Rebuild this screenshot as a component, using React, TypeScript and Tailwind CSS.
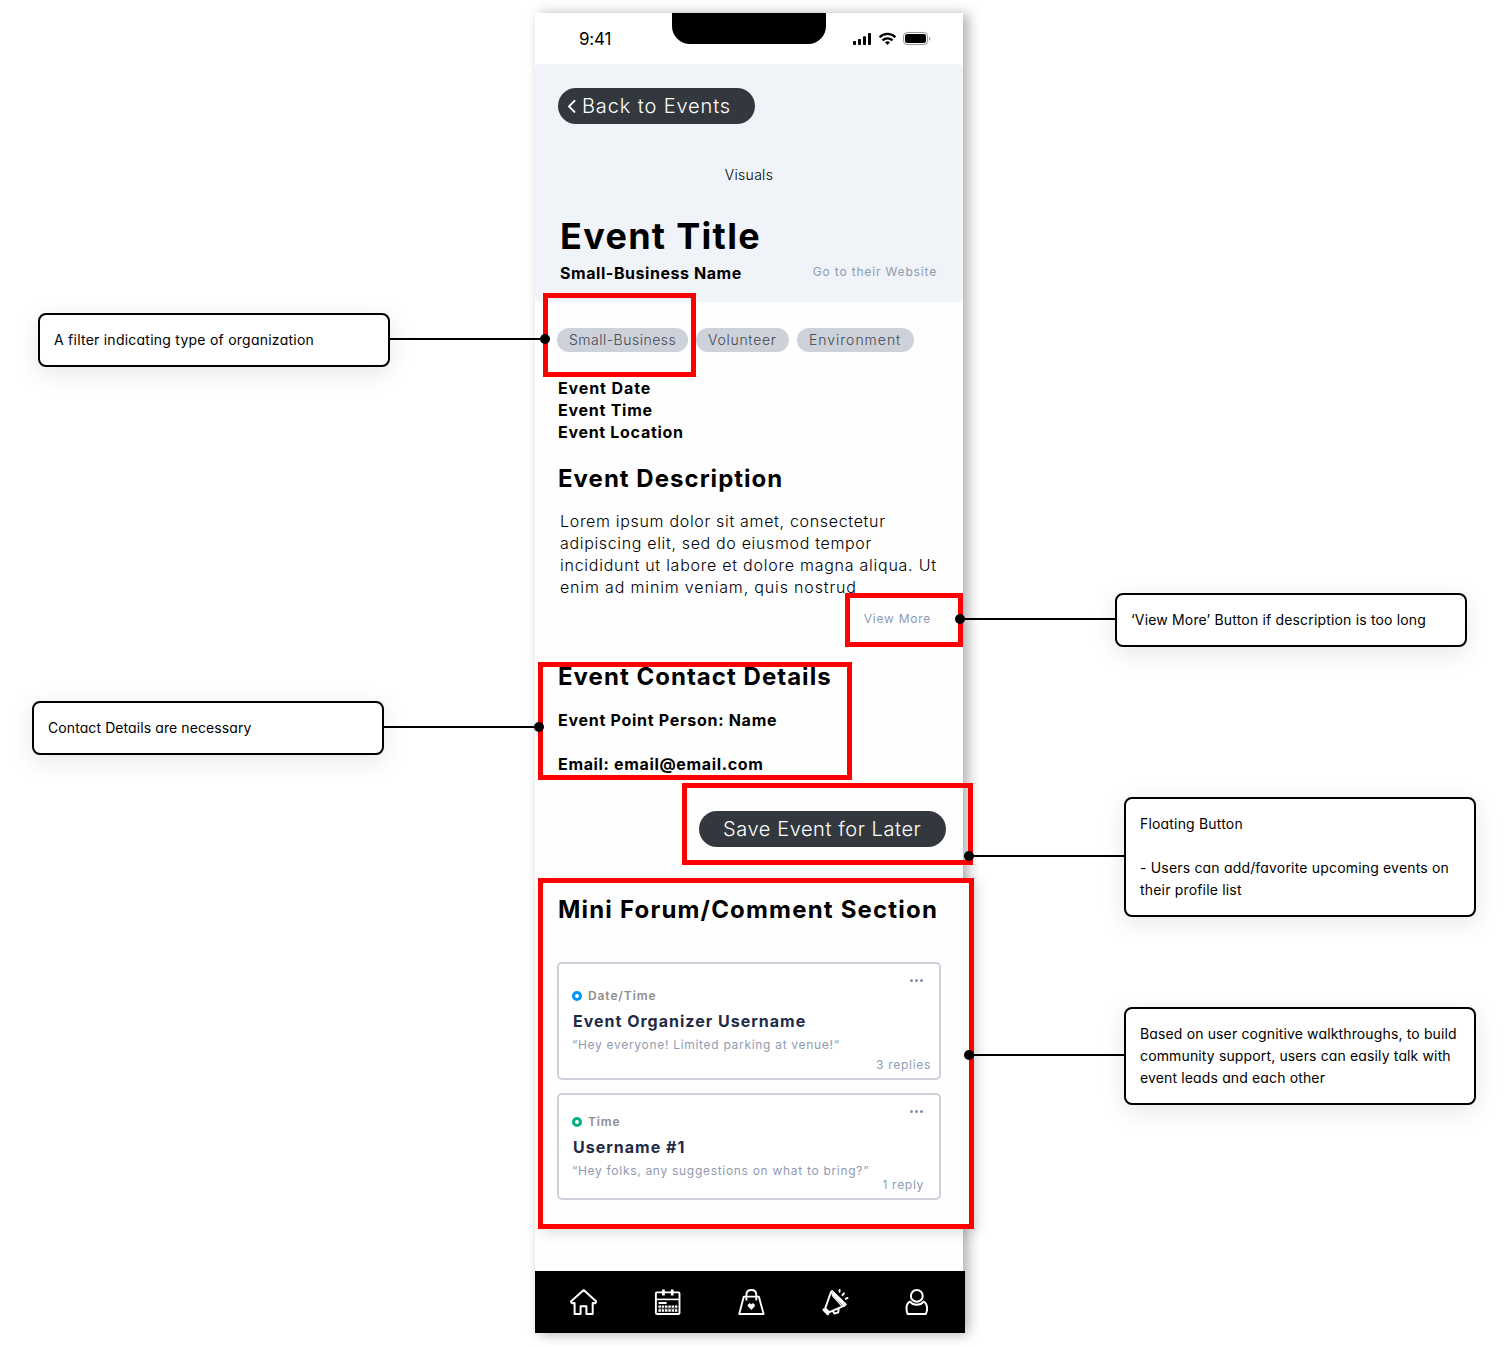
import React from "react";

function StatusIcons() {
  return (
    <svg width="80" height="16" viewBox="0 0 80 16" fill="none">
      <g fill="#000">
        <rect x="1" y="10" width="3" height="4" rx="0.8" />
        <rect x="6" y="8" width="3" height="6" rx="0.8" />
        <rect x="11" y="5.3" width="3" height="8.7" rx="0.8" />
        <rect x="16" y="2" width="3" height="12" rx="0.8" />
      </g>
      <g stroke="#000" strokeWidth="2.3">
        <path d="M27.6 6.2C32 1.7 39 1.7 43.4 6.2" />
        <path d="M30.5 9.4C33.3 6.6 37.7 6.6 40.5 9.4" />
      </g>
      <path d="M32.9 11.2C34.4 9.9 36.6 9.9 38.1 11.2L35.5 13.9Z" fill="#000" />
      <rect x="51.5" y="1.5" width="24" height="12" rx="3.6" stroke="#000" strokeOpacity="0.4" />
      <rect x="53" y="3" width="21" height="9" rx="2.2" fill="#000" />
      <path d="M77 5.8V9.8C77.8 9.4 78.3 8.7 78.3 7.8S77.8 6.2 77 5.8Z" fill="#000" fillOpacity="0.4" />
    </svg>
  );
}

function HomeIcon() {
  return (
    <svg className="size-7" viewBox="0 0 28 28" fill="none" stroke="#fff" strokeWidth="2" strokeLinejoin="round" strokeLinecap="round">
      <path d="M14.7 2 1.9 13.6 3 15.2 5.6 15V25.9H11.6V18.2H17.4V25.9H23.7V15L26.3 15.2 27.3 13.6Z" />
    </svg>
  );
}

function CalendarIcon() {
  return (
    <svg className="size-7" viewBox="0 0 28 28" fill="none" stroke="#fff">
      <rect x="2.9" y="4.4" width="23.6" height="21.6" rx="1" strokeWidth="1.9" />
      <path d="M3 11.4H26.4" strokeWidth="1.6" />
      <path d="M10.4 1.4V7.6M19.2 1.4V7.6" strokeWidth="2.8" />
      <path d="M5.6 15H13.6" strokeWidth="2" />
      <path d="M5.4 18.6H24.4M5.4 22.5H24.4" strokeWidth="2.3" strokeDasharray="2.5 0.8" />
      <path d="M5.6 20.6H24.2" strokeWidth="1" strokeOpacity="0.3" />
    </svg>
  );
}

function BagIcon() {
  return (
    <svg className="size-7" viewBox="0 0 28 28" fill="none" stroke="#fff" strokeWidth="1.9" strokeLinejoin="round">
      <path d="M6.8 8.6H21.8L26.6 26H2.2Z" />
      <path d="M9.4 12.4V6.9C9.4 3.8 11.6 2 14.4 2S19.3 3.8 19.3 6.9V12.4" />
      <path d="M14.3 21.6 11.3 18.3C10.1 16.7 12.6 14.5 14.3 16.6 16 14.5 18.5 16.7 17.3 18.3Z" fill="#fff" strokeWidth="0.8" />
    </svg>
  );
}

function MegaphoneIcon() {
  return (
    <svg className="size-7" viewBox="0 0 28 28" fill="none" stroke="#fff" strokeWidth="1.7" strokeLinejoin="round" strokeLinecap="round">
      <path d="M11 2.9 24.9 16.4 23.1 17.7 9.9 4.5Z" />
      <path d="M11.4 7.6 20.2 17.4" strokeWidth="1.3" />
      <path d="M12.6 5.6 21.9 15.2" strokeWidth="1.8" />
      <path d="M9.9 4.2 4.2 20.4 8.5 24.2 23.3 17.7" strokeWidth="1.9" />
      <path d="M2.9 21.8 6.8 25.6" strokeWidth="3" />
      <path d="M11.8 22.8 13.4 25.6 17.2 24.4 17.6 20.8" strokeWidth="2" />
      <path d="M18.6 2V3.8M22.9 5.3 21.4 7.1M26.6 9.9 24.8 10.9" strokeWidth="1.9" />
    </svg>
  );
}

function ProfileIcon() {
  return (
    <svg className="size-7" viewBox="0 0 28 28" fill="none" stroke="#fff" strokeWidth="2" strokeLinejoin="round">
      <circle cx="11.8" cy="7.9" r="5.9" />
      <path d="M5 13.6C2.7 14.4 1.6 17.6 1.5 20.4 1.4 22.6 2 24.6 2.6 26H20.8C21.5 24.6 22.2 22.6 22.1 20.4 21.9 17.6 20.9 14.4 18.6 13.6 17.2 15.4 14.8 16.8 11.8 16.8S6.4 15.4 5 13.6Z" />
    </svg>
  );
}

function Chip({ children, className }: { children: string; className: string }) {
  return (
    <span className={`flex h-6 items-center whitespace-nowrap rounded-full bg-[#cdd1d9] pl-3 text-sm font-[350] text-[#444952] ${className}`}>
      {children}
    </span>
  );
}

interface CommentProps {
  className: string;
  ring: string;
  when: string;
  whenClass: string;
  author: string;
  text: string;
  replies: string;
  repliesClass: string;
}

function Comment({ className, ring, when, whenClass, author, text, replies, repliesClass }: CommentProps) {
  return (
    <article className={`flex w-96 flex-col whitespace-nowrap rounded-[5px] border-2 border-[#cdd1d9] bg-white pt-3 pl-[13px] ${className}`}>
      <div className="flex h-2 shrink-0 items-center justify-end gap-[2px] pr-4">
        <i className="size-[3px] rounded-full bg-[#8190ad]" />
        <i className="size-[3px] rounded-full bg-[#8190ad]" />
        <i className="size-[3px] rounded-full bg-[#8190ad]" />
      </div>
      <div className={`flex h-4 shrink-0 items-center gap-1.5 text-[12px] font-semibold tracking-[0.9px] text-[#8d8d8d] ${whenClass}`}>
        <i className={`size-2.5 rounded-full border-3 ${ring}`} />
        {when}
      </div>
      <h3 className="mt-[7px] ml-px text-base leading-5 font-bold tracking-[1px] text-[#222b45]">{author}</h3>
      <p className="mt-1.5 text-[12px] leading-4 tracking-[0.7px] text-[#8f9bb3]">{text}</p>
      <span className={`self-end text-[12px] leading-4 tracking-[0.7px] text-[#8f9bb3] ${repliesClass}`}>{replies}</span>
    </article>
  );
}

function Note({ className, children }: { className: string; children: React.ReactNode }) {
  return (
    <div className={`absolute w-[352px] rounded-lg border-2 border-black bg-white p-3.5 text-sm leading-[22px] whitespace-nowrap text-black shadow-[0_6px_24px_rgba(0,0,0,0.1)] [font-feature-settings:'cv11'] ${className}`}>
      {children}
    </div>
  );
}

function Connector({ className, end }: { className: string; end: "left" | "right" }) {
  return (
    <div className={`absolute flex h-2.5 items-center ${end === "left" ? "flex-row" : "flex-row-reverse"} ${className}`}>
      <i className="size-2.5 shrink-0 rounded-full bg-black" />
      <i className="h-0.5 grow bg-black" />
    </div>
  );
}

export default function App() {
  return (
    <div className="relative h-[1346px] w-[1508px] overflow-hidden bg-white font-['Inter','Liberation_Sans',sans-serif] text-black">
      <main className="mt-[13px] ml-[535px] flex h-[1320px] w-[428px] flex-col bg-[#fefefe] shadow-[5px_1px_12px_rgba(0,0,0,0.32)]">
        <header className="flex h-[51px] shrink-0 bg-white pl-11">
          <time className="mt-3.5 w-[93px] text-[17px] leading-6 tracking-[-0.2px]">9:41</time>
          <div className="h-[31px] w-[154px] rounded-b-[18px] bg-black" />
          <div className="mt-[18px] ml-[26px]">
            <StatusIcons />
          </div>
        </header>

        <section className="flex h-[238px] shrink-0 flex-col whitespace-nowrap rounded-[5px] bg-[#f0f3f8] pt-6">
          <button className="ml-[23px] flex h-9 w-[197px] items-center rounded-full bg-[#33383f] pl-[9px] text-xl font-light tracking-[0.88px] text-white">
            <svg className="mr-[5px] h-4 w-2.5" viewBox="0 0 10 16" fill="none" stroke="#fff" strokeWidth="2" strokeLinecap="round" strokeLinejoin="round">
              <path d="M7.5 2.9 2 8.4 7.5 13.9" />
            </svg>
            Back to Events
          </button>
          <p className="mt-[41px] text-center text-sm leading-5 font-[350] tracking-[0.3px]">Visuals</p>
          <h1 className="mt-[29px] ml-[25px] text-[36px] leading-[44px] font-bold tracking-[1.3px]">Event Title</h1>
          <div className="mt-1 flex items-center justify-between pr-[26px] pl-[25px]">
            <h2 className="text-base leading-[22px] font-bold tracking-[0.56px]">Small-Business Name</h2>
            <a className="mb-0.5 text-[12px] leading-4 tracking-[0.84px] text-[#8f9bb3]">Go to their Website</a>
          </div>
        </section>

        <div className="mt-[26px] ml-[22px] flex gap-2">
          <Chip className="w-[131px] tracking-[0.5px]">Small-Business</Chip>
          <Chip className="w-[93px] tracking-[0.72px]">Volunteer</Chip>
          <Chip className="w-[117px] tracking-[0.98px]">Environment</Chip>
        </div>

        <ul className="mt-[25px] ml-[23px] text-base leading-[22px] font-bold">
          <li className="tracking-[0.9px]">Event Date</li>
          <li className="tracking-[0.75px]">Event Time</li>
          <li className="tracking-[0.7px]">Event Location</li>
        </ul>

        <section className="mt-5 ml-[23px] whitespace-nowrap">
          <h2 className="text-2xl leading-8 font-bold tracking-[1.02px]">Event Description</h2>
          <p className="mt-[15px] ml-[2px] flex flex-col text-base leading-[22px] font-[350]">
            <span className="tracking-[0.68px]">Lorem ipsum dolor sit amet, consectetur</span>
            <span className="tracking-[0.66px]">adipiscing elit, sed do eiusmod tempor</span>
            <span className="tracking-[0.75px]">incididunt ut labore et dolore magna aliqua. Ut</span>
            <span className="tracking-[0.84px]">enim ad minim veniam, quis nostrud</span>
          </p>
          <a className="mt-[13px] mr-8 block text-right text-[12px] leading-4 tracking-[0.75px] text-[#8f9bb3]">View More</a>
        </section>

        <section className="mt-[34px] ml-[23px] whitespace-nowrap">
          <h2 className="text-2xl leading-8 font-bold tracking-[1.03px]">Event Contact Details</h2>
          <p className="mt-4 text-base leading-[22px] font-bold tracking-[0.72px]">Event Point Person: Name</p>
          <p className="mt-[22px] text-base leading-[22px] font-bold tracking-[0.66px]">Email: email@email.com</p>
        </section>

        <button className="mt-9 mr-[17px] flex h-9 w-[247px] shrink-0 items-center self-end rounded-full bg-[#33383f] pl-6 text-xl font-light tracking-[0.58px] whitespace-nowrap text-white">
          Save Event for Later
        </button>

        <section className="mt-[31px] ml-[3px] flex h-[351px] w-[436px] shrink-0 flex-col border-5 border-[#ff0000] bg-[#fefefe] pt-[11px] pl-3.5 shadow-[4px_4px_12px_rgba(0,0,0,0.12)]">
          <h2 className="ml-px text-2xl leading-8 font-bold tracking-[1.19px] whitespace-nowrap">Mini Forum/Comment Section</h2>
          <Comment
            className="mt-9 h-[118px]"
            ring="border-[#0095ff]"
            when="Date/Time"
            whenClass="mt-1"
            author="Event Organizer Username"
            text="“Hey everyone! Limited parking at venue!“"
            replies="3 replies"
            repliesClass="mt-1 mr-2"
          />
          <Comment
            className="mt-[13px] h-[107px]"
            ring="border-[#00b383]"
            when="Time"
            whenClass="-mt-px"
            author="Username #1"
            text="“Hey folks, any suggestions on what to bring?”"
            replies="1 reply"
            repliesClass="-mt-0.5 mr-[15px]"
          />
        </section>

        <nav className="mt-auto flex h-[62px] w-[430px] shrink-0 items-center gap-14 bg-black pl-[34px]">
          <HomeIcon />
          <CalendarIcon />
          <BagIcon />
          <MegaphoneIcon />
          <ProfileIcon />
        </nav>
      </main>

      <div className="absolute top-[293px] left-[543px] h-[84px] w-[153px] border-5 border-[#ff0000]" />
      <div className="absolute top-[593px] left-[845px] h-[54px] w-[118px] border-5 border-[#ff0000]" />
      <div className="absolute top-[662px] left-[538px] h-[118px] w-[314px] border-5 border-[#ff0000]" />
      <div className="absolute top-[783px] left-[682px] h-[82px] w-[291px] border-5 border-[#ff0000]" />

      <Note className="top-[313px] left-[38px] tracking-[0.24px]">A filter indicating type of organization</Note>
      <Note className="top-[701px] left-8 tracking-[0.09px]">Contact Details are necessary</Note>
      <Note className="top-[593px] left-[1115px] tracking-[0.17px]">‘View More’ Button if description is too long</Note>
      <Note className="top-[797px] left-[1124px] tracking-[0.18px]">
        Floating Button
        <br />
        <br />- Users can add/favorite upcoming events on
        <br />
        their profile list
      </Note>
      <Note className="top-[1007px] left-[1124px] tracking-[0.14px]">
        Based on user cognitive walkthroughs, to build
        <br />
        community support, users can easily talk with
        <br />
        event leads and each other
      </Note>

      <Connector end="right" className="top-[334px] left-[390px] w-40" />
      <Connector end="right" className="top-[722px] left-[384px] w-40" />
      <Connector end="left" className="top-[614px] left-[955px] w-40" />
      <Connector end="left" className="top-[851px] left-[964px] w-40" />
      <Connector end="left" className="top-[1050px] left-[964px] w-40" />
    </div>
  );
}
